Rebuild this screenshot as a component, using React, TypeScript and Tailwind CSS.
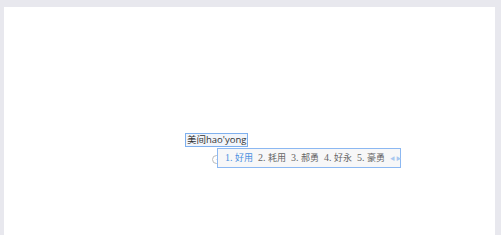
export default function App() {
  const candidates = ['好用', '耗用', '郝勇', '好永', '豪勇']

  return (
    <div className="h-[235px] w-[501px] overflow-hidden bg-[#e8e8ee] pl-[4px] pr-[6px] pt-[7px]">
      <div className="flex h-full flex-col items-start bg-white pl-[181px] pt-[126px]">
        <div className="whitespace-nowrap border border-[#7fb0ee] bg-[#f1f5fb] px-[1px] text-[9.5px] leading-[12px] text-[#333] [font-family:'Open_Sans','Noto_Sans_CJK_SC',sans-serif]">
          美间hao&apos;yong
        </div>
        <div className="flex items-center pl-[27px] pt-[1px]">
          {/* little IME logo peeking behind the box */}
          <div className="-mr-[4px] mt-[2px] flex h-[9px] w-[9px] shrink-0 items-center justify-center rounded-full border border-[#bbb] text-[6px] leading-none text-[#999]">
            ·
          </div>
          <div className="flex h-[20px] w-[184px] shrink-0 items-center whitespace-nowrap border border-[#8cb8f2] bg-[#f7f7f8] pl-[7px] text-[9px] leading-none text-[#666] [font-family:'Liberation_Serif','Noto_Sans_CJK_SC',serif]">
            {candidates.map((c, i) => (
              <span key={c} className={`w-[33px] shrink-0 ${i === 0 ? 'text-[#4a8fe0]' : ''}`}>
                <span className="text-[10px]">{i + 1}. </span>
                {c}
              </span>
            ))}
            <span className="ml-auto mr-[5px] flex shrink-0 items-center gap-[1px] text-[5px] text-[#a9c8f0]">
              <span>◀</span>
              <span>▶</span>
            </span>
          </div>
        </div>
      </div>
    </div>
  )
}
